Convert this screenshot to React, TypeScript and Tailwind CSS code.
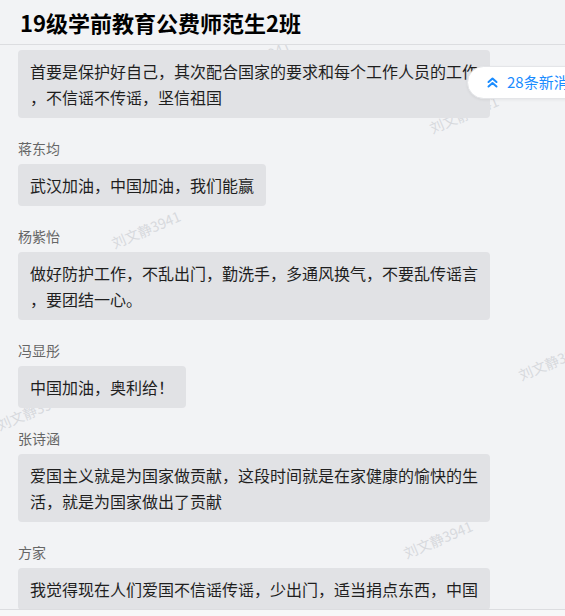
const font = { fontFamily: '"Noto Sans CJK SC", "Noto Sans", sans-serif' };

type Msg = { name?: string; lines: string[] };

const messages: Msg[] = [
    { lines: ['首要是保护好自己，其次配合国家的要求和每个工作人员的工作', '，不信谣不传谣，坚信祖国'] },
    { name: '蒋东均', lines: ['武汉加油，中国加油，我们能赢'] },
    { name: '杨紫怡', lines: ['做好防护工作，不乱出门，勤洗手，多通风换气，不要乱传谣言', '，要团结一心。'] },
    { name: '冯显彤', lines: ['中国加油，奥利给！'] },
    { name: '张诗涵', lines: ['爱国主义就是为国家做贡献，这段时间就是在家健康的愉快的生', '活，就是为国家做出了贡献'] },
    { name: '方家', lines: ['我觉得现在人们爱国不信谣传谣，少出门，适当捐点东西，中国'] },
];

// watermark start points (bottom-left of text)
const marks = [
    { x: 225, y: 80 },
    { x: 433, y: 135 },
    { x: 115, y: 250 },
    { x: 522, y: 382 },
    { x: 0, y: 432 },
    { x: 407, y: 560 },
];

const App = () => {
    return (
        <div className="relative flex h-[616px] w-[565px] flex-col overflow-hidden bg-[#f2f3f5] text-[#222]" style={font}>
            {/* watermark layer, under messages */}
            <div className="pointer-events-none absolute inset-0">
                {marks.map((m, i) => (
                    <span
                        key={i}
                        className="absolute origin-bottom-left -rotate-[23deg] whitespace-nowrap text-[14px] leading-[14px] text-[#d7d9dd]"
                        style={{ left: m.x, top: m.y - 14 }}
                    >
                        刘文静3941
                    </span>
                ))}
            </div>

            <div className="relative z-10 flex h-[45px] shrink-0 items-center border-b border-[#dcdde0] bg-[#f2f3f5] px-5">
                <h1 className="text-[22px] font-bold leading-none text-black">19级学前教育公费师范生2班</h1>
            </div>

            <div className="relative z-10 flex-1 overflow-hidden pl-[18px] pt-[5px]">
                {messages.map((m, i) => (
                    <div key={i}>
                        {m.name && (
                            <div className="mt-5 mb-[6px] text-[14px] leading-5 text-[#666]">{m.name}</div>
                        )}
                        <div className="w-fit max-w-[473px] rounded-[4px] bg-[#e1e2e5] px-3 py-2 text-[16px] leading-[26px] text-[#1f1f1f]">
                            {m.lines.map((l, j) => (
                                <div key={j} className="whitespace-nowrap">{l}</div>
                            ))}
                        </div>
                    </div>
                ))}
            </div>

            <div className="relative z-10 h-[7px] shrink-0 border-t border-[#dcdde0] bg-[#f6f7f8]" />

            {/* new messages pill */}
            <div className="absolute left-[467px] top-[66px] z-20 flex h-[33px] w-[120px] items-center rounded-l-full border border-[#e4e5e8] bg-white pl-[19px] text-[15px] text-[#1a8cff] shadow-[0_1px_3px_rgba(0,0,0,0.06)]">
                <svg width="11" height="11" viewBox="0 0 11 11" fill="none" stroke="#1a8cff" strokeWidth="2" strokeLinecap="round" strokeLinejoin="round">
                    <path d="M1.5 5 L5.5 1.5 L9.5 5" />
                    <path d="M1.5 9.5 L5.5 6 L9.5 9.5" />
                </svg>
                <span className="ml-[9px] whitespace-nowrap">28条新消息</span>
            </div>
        </div>
    );
};

export default App;
